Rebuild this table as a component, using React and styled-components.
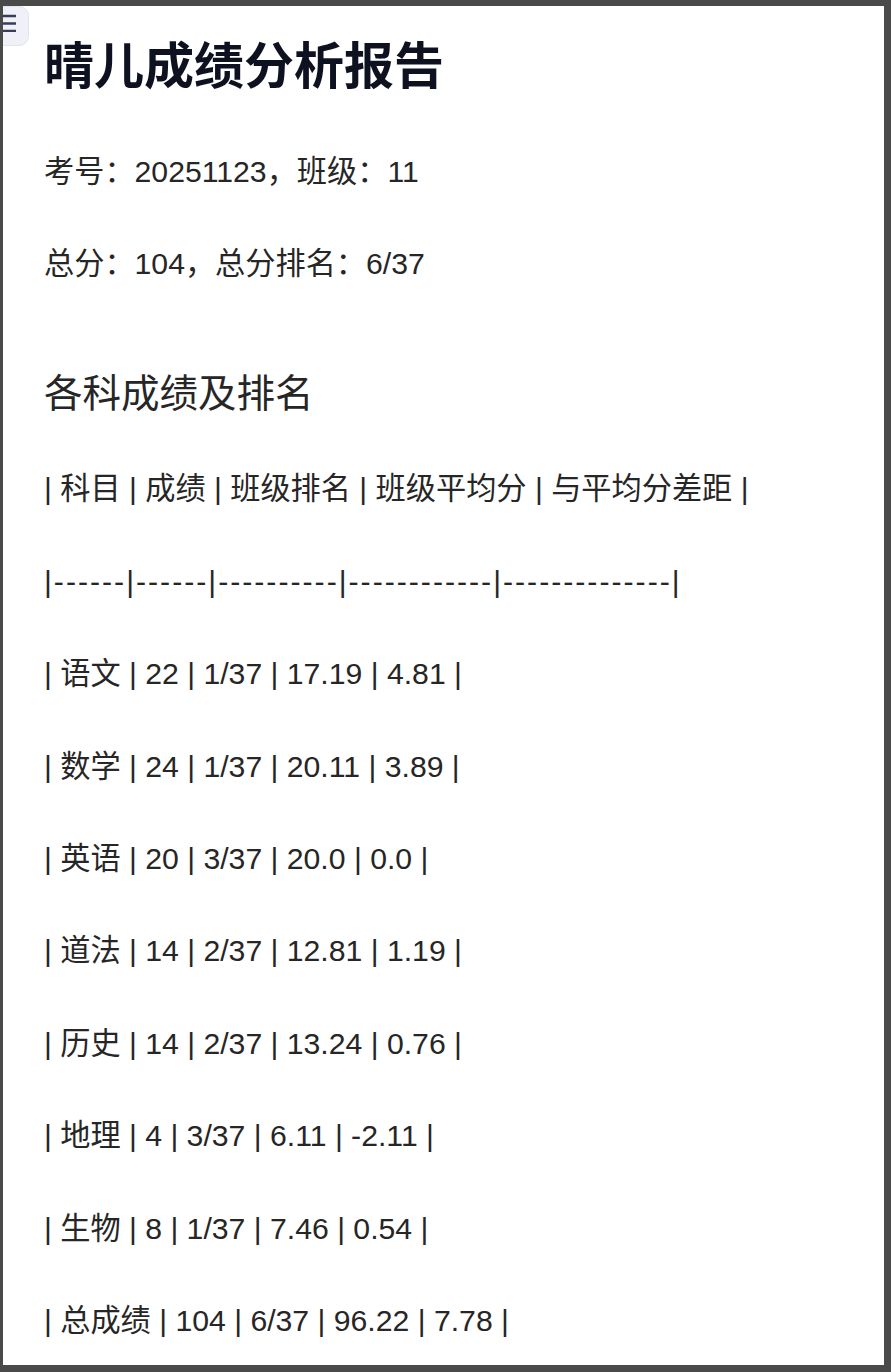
import React from 'react';
import styled, { createGlobalStyle } from 'styled-components';

const GlobalStyle = createGlobalStyle`
  html, body {
    margin: 0;
    padding: 0;
    background: #4a4a4a;
  }
  * {
    box-sizing: border-box;
  }
`;

const Frame = styled.div`
  height: 1372px;
  padding: 6px 7px 7px 3px;
  background: #4a4a4a;
`;

const Panel = styled.div`
  position: relative;
  height: 100%;
  background: #ffffff;
  overflow: hidden;
  padding: 26px 40px 0 41px;
  font-family: "Liberation Sans", "Noto Sans CJK SC", sans-serif;
  color: #262626;
`;

const MenuButton = styled.button`
  position: absolute;
  top: 0;
  left: -14px;
  width: 40px;
  height: 40px;
  padding: 0 0 6px;
  border: 1px solid #e1e3ee;
  border-radius: 10px;
  background: #f0f1f8;
  display: flex;
  align-items: center;
  justify-content: center;
  cursor: pointer;
`;

const Title = styled.h1`
  margin: 0 0 57px;
  font-family: "Noto Sans CJK SC", sans-serif;
  font-size: 50px;
  line-height: 60px;
  font-weight: 700;
  color: #0e1120;
`;

const Section = styled.h2`
  margin: 75px 0 48px;
  font-family: "Noto Sans CJK SC", sans-serif;
  font-size: 38.5px;
  line-height: 56px;
  font-weight: 400;
  color: #262626;
`;

const Para = styled.p`
  margin: 0 0 46.4px;
  font-size: 30.2px;
  line-height: 46px;
  white-space: pre;
  letter-spacing: ${(p) => (p.$rule ? '2px' : '0')};
`;

const rows = [
  '| 科目 | 成绩 | 班级排名 | 班级平均分 | 与平均分差距 |',
  '|------|------|----------|------------|--------------|',
  '| 语文 | 22 | 1/37 | 17.19 | 4.81 |',
  '| 数学 | 24 | 1/37 | 20.11 | 3.89 |',
  '| 英语 | 20 | 3/37 | 20.0 | 0.0 |',
  '| 道法 | 14 | 2/37 | 12.81 | 1.19 |',
  '| 历史 | 14 | 2/37 | 13.24 | 0.76 |',
  '| 地理 | 4 | 3/37 | 6.11 | -2.11 |',
  '| 生物 | 8 | 1/37 | 7.46 | 0.54 |',
  '| 总成绩 | 104 | 6/37 | 96.22 | 7.78 |',
];

const MenuIcon = () => (
  <svg width="14" height="18" viewBox="0 0 14 18" fill="none">
    <path d="M0 2h14M0 9.5h14M0 17h14" stroke="#3a3d55" strokeWidth="2.4" />
  </svg>
);

export default function App() {
  return (
    <>
      <GlobalStyle />
      <Frame>
        <Panel>
          <MenuButton aria-label="菜单">
            <MenuIcon />
          </MenuButton>
          <Title>晴儿成绩分析报告</Title>
          <Para>考号：20251123，班级：11</Para>
          <Para>总分：104，总分排名：6/37</Para>
          <Section>各科成绩及排名</Section>
          {rows.map((row, i) => (
            <Para key={i} $rule={row.startsWith('|-')}>
              {row}
            </Para>
          ))}
        </Panel>
      </Frame>
    </>
  );
}
